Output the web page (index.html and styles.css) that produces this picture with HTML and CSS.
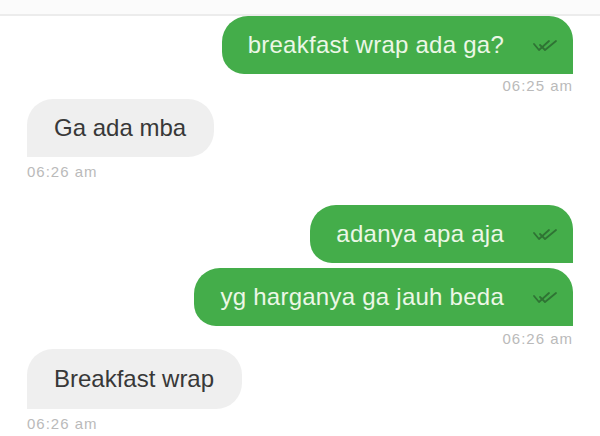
FILE: index.html
```html
<!DOCTYPE html>
<html>
<head>
    <title>Chat</title>
    <link rel="stylesheet" href="styles.css">
</head>
<body>
    <div class="topbar"></div>

    <div class="chat">
        <div class="msg out first">
            <div class="bubble">
                <span class="text">breakfast wrap ada ga?</span>
                <svg class="tick" viewBox="0 0 28 14"><path d="M2 5l5 6L17 2" /><path d="M8 6l5 5L24 2" /></svg>
            </div>
            <div class="time">06:25 am</div>
        </div>

        <div class="msg in m2">
            <div class="bubble">
                <span class="text">Ga ada mba</span>
            </div>
            <div class="time">06:26 am</div>
        </div>

        <div class="msg out m3">
            <div class="bubble">
                <span class="text">adanya apa aja</span>
                <svg class="tick" viewBox="0 0 28 14"><path d="M2 5l5 6L17 2" /><path d="M8 6l5 5L24 2" /></svg>
            </div>
            <div class="bubble next">
                <span class="text">yg harganya ga jauh beda</span>
                <svg class="tick" viewBox="0 0 28 14"><path d="M2 5l5 6L17 2" /><path d="M8 6l5 5L24 2" /></svg>
            </div>
            <div class="time">06:26 am</div>
        </div>

        <div class="msg in m4">
            <div class="bubble">
                <span class="text">Breakfast wrap</span>
            </div>
            <div class="time">06:26 am</div>
        </div>
    </div>
</body>
</html>
```

FILE: styles.css
```css
body {
    margin: 0;
    background: #ffffff;
    font-family: "Liberation Sans", Arial, sans-serif;
    overflow: hidden;
}
.topbar {
    height: 14px;
    background: #fbfbfb;
    border-bottom: 2px solid #ececec;
}
.chat {
    display: flex;
    flex-direction: column;
    padding: 0 27px;
}
.msg {
    display: flex;
    flex-direction: column;
}
.msg.out {
    align-items: flex-end;
}
.msg.in {
    align-items: flex-start;
}
.m2 {
    margin-top: 4px;
}
.m3 {
    margin-top: 24px;
}
.m4 {
    margin-top: 1px;
}
.bubble {
    display: flex;
    align-items: center;
    height: 58px;
    font-size: 24px;
    box-sizing: border-box;
}
.out .bubble {
    background: #44ad4a;
    color: #ecf7e6;
    padding: 0 13px 0 26px;
    gap: 28px;
    letter-spacing: 0.25px;
    border-radius: 26px 24px 0 22px;
}
.out .bubble.next {
    margin-top: 5px;
}
.in .bubble {
    background: #efefef;
    color: #383838;
    padding: 0 28px 0 27px;
    border-radius: 26px 26px 26px 0;
}
.in.m4 .bubble {
    height: 60px;
}
.tick {
    width: 28px;
    height: 14px;
    margin-top: 2px;
    fill: none;
    stroke: #2f7334;
    stroke-width: 1.8;
    stroke-linecap: round;
    stroke-linejoin: round;
}
.time {
    margin-top: 3px;
    font-size: 15px;
    line-height: 18px;
    letter-spacing: 1px;
    color: #bababa;
}
.in .time {
    margin-top: 6px;
}
.m4 .time {
    margin-top: 6px;
}
.m3 .time {
    margin-top: 4px;
}
```
